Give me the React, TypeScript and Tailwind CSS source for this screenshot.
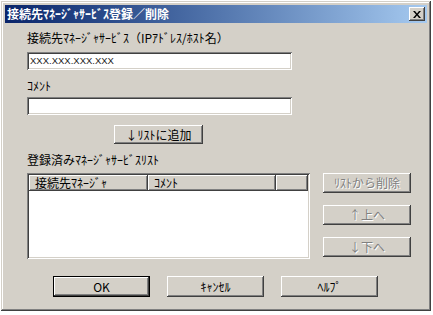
const raised =
  'shadow-[inset_-1px_-1px_#404040,inset_1px_1px_#ffffff,inset_-2px_-2px_#808080,inset_2px_2px_#d4d0c8]';
const sunken =
  'shadow-[inset_1px_1px_#808080,inset_-1px_-1px_#ffffff,inset_2px_2px_#404040,inset_-2px_-2px_#d4d0c8]';

const Button = ({
  label,
  w,
  h,
  disabled,
  isDefault,
}: {
  label: string;
  w: string;
  h: string;
  disabled?: boolean;
  isDefault?: boolean;
}) => (
  <div
    className={`${w} ${h} bg-[#d4d0c8] flex items-center justify-center text-[12px] leading-[16px] ${
      isDefault ? 'border border-black' : ''
    }`}
  >
    <div className={`w-full h-full flex items-center justify-center ${raised}`}>
      <span
        className={
          disabled ? 'text-[#808080] [text-shadow:1px_1px_0_#ffffff]' : 'text-black'
        }
      >
        {label}
      </span>
    </div>
  </div>
);

export default function App() {
  return (
    <div className="w-[433px] h-[315px] bg-white pl-[1px] pt-[1px] font-['Noto_Sans_CJK_JP',sans-serif] text-black">
      <div
        className={`w-[430px] h-[310px] bg-[#d4d0c8] p-[4px] flex flex-col shadow-[inset_-1px_-1px_#404040,inset_1px_1px_#d4d0c8,inset_-2px_-2px_#808080,inset_2px_2px_#ffffff]`}
      >
        {/* Title bar */}
        <div className="h-[18px] flex items-center justify-between bg-linear-to-r from-[#0a246a] to-[#a6caf0] pl-[2px] pr-[2px]">
          <span className="text-white font-bold text-[12px] leading-[16px]">
            接続先ﾏﾈｰｼﾞｬｻｰﾋﾞｽ登録／削除
          </span>
          <div className={`w-[16px] h-[14px] bg-[#d4d0c8] flex items-center justify-center ${raised}`}>
            <svg width="8" height="7" viewBox="0 0 8 7">
              <path d="M0 0h2l2 2.5L6 0h2L5 3.5 8 7H6L4 4.5 2 7H0l3-3.5z" fill="#000" />
            </svg>
          </div>
        </div>

        {/* Content */}
        <div className="flex flex-col pl-[22px] text-[12px] leading-[16px]">
          <div className="mt-[7px] h-[16px]">接続先ﾏﾈｰｼﾞｬｻｰﾋﾞｽ（IPｱﾄﾞﾚｽ/ﾎｽﾄ名）</div>
          <div className={`mt-[6px] w-[265px] h-[18px] bg-white ${sunken} flex items-center px-[3px]`}>
            <span className="font-['Liberation_Sans',sans-serif] text-[9.5px] leading-[12px] text-[#222]">
              XXX.XXX.XXX.XXX
            </span>
          </div>

          <div className="mt-[8px] h-[16px]">ｺﾒﾝﾄ</div>
          <div className={`mt-[3px] w-[265px] h-[18px] bg-white ${sunken}`} />

          <div className="mt-[10px] ml-[87px]">
            <Button label="↓ﾘｽﾄに追加" w="w-[89px]" h="h-[19px]" />
          </div>

          <div className="mt-[8px] h-[16px]">登録済みﾏﾈｰｼﾞｬｻｰﾋﾞｽﾘｽﾄ</div>

          <div className="mt-[5px] flex">
            <div className={`w-[283px] h-[86px] bg-white p-[2px] ${sunken} flex flex-col`}>
              <div className="flex h-[16px] bg-[#d4d0c8]">
                <div className={`w-[119px] h-full px-[6px] flex items-center ${raised}`}>接続先ﾏﾈｰｼﾞｬ</div>
                <div className={`w-[128px] h-full px-[6px] flex items-center ${raised}`}>ｺﾒﾝﾄ</div>
                <div className={`flex-1 h-full ${raised}`} />
              </div>
            </div>
            <div className="ml-[13px] flex flex-col gap-[12px]">
              <Button label="ﾘｽﾄから削除" w="w-[88px]" h="h-[20px]" disabled />
              <Button label="↑上へ" w="w-[88px]" h="h-[20px]" disabled />
              <Button label="↓下へ" w="w-[88px]" h="h-[20px]" disabled />
            </div>
          </div>

          <div className="mt-[17px] ml-[26px] flex gap-[17px]">
            <Button label="OK" w="w-[97px]" h="h-[21px]" isDefault />
            <Button label="ｷｬﾝｾﾙ" w="w-[97px]" h="h-[21px]" />
            <Button label="ﾍﾙﾌﾟ" w="w-[97px]" h="h-[21px]" />
          </div>
        </div>
      </div>
    </div>
  );
}
